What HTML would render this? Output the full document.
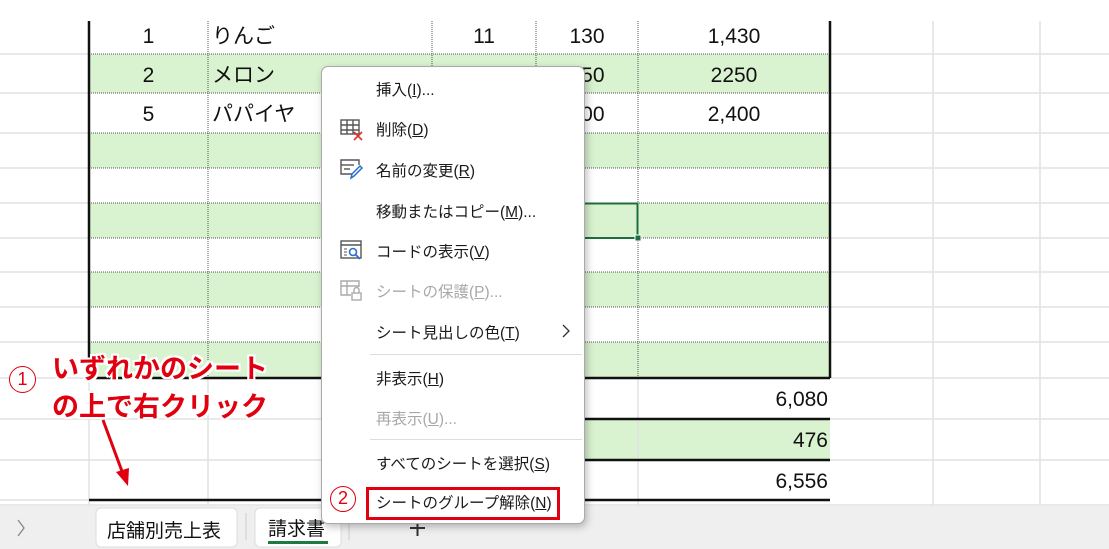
<!DOCTYPE html>
<html><head><meta charset="utf-8"><style>
*{margin:0;padding:0;box-sizing:border-box}
body{width:1109px;height:549px;overflow:hidden;background:#fff;position:relative;font-family:"Liberation Sans","Noto Sans CJK JP",sans-serif;color:#111}
.a{position:absolute}
.t{position:absolute;font-size:21px;line-height:40px;height:40px}
.mi{position:absolute;left:54px;font-size:15.5px;color:#1a1a1a;white-space:nowrap}
.dis{color:#a8a8a8}
u{text-decoration:underline}
.ann{position:absolute;color:#e0000f;font-weight:bold;font-size:27px;white-space:nowrap;text-shadow:2px 0 #fff,-2px 0 #fff,0 2px #fff,0 -2px #fff,2px 2px #fff,-2px -2px #fff,2px -2px #fff,-2px 2px #fff}
</style></head><body>
<svg class="a" style="left:0;top:0" width="1109" height="549">
<g fill="#d9f2d0">
<rect x="89" y="54" width="741" height="39"/>
<rect x="89" y="133" width="741" height="35"/>
<rect x="89" y="203" width="741" height="35"/>
<rect x="89" y="272" width="741" height="35"/>
<rect x="89" y="342" width="741" height="36"/>
<rect x="432" y="419" width="398" height="41"/>
</g>
<g stroke="#e2e2e2" stroke-width="1.5">
<line x1="0" y1="54" x2="89" y2="54"/><line x1="0" y1="93" x2="89" y2="93"/><line x1="0" y1="133" x2="89" y2="133"/><line x1="0" y1="168" x2="89" y2="168"/><line x1="0" y1="203" x2="89" y2="203"/><line x1="0" y1="238" x2="89" y2="238"/><line x1="0" y1="272" x2="89" y2="272"/><line x1="0" y1="307" x2="89" y2="307"/><line x1="0" y1="342" x2="89" y2="342"/><line x1="0" y1="378" x2="89" y2="378"/><line x1="0" y1="419" x2="89" y2="419"/><line x1="0" y1="460" x2="89" y2="460"/><line x1="0" y1="500" x2="89" y2="500"/>
<line x1="830" y1="54" x2="1109" y2="54"/><line x1="830" y1="93" x2="1109" y2="93"/><line x1="830" y1="133" x2="1109" y2="133"/><line x1="830" y1="168" x2="1109" y2="168"/><line x1="830" y1="203" x2="1109" y2="203"/><line x1="830" y1="238" x2="1109" y2="238"/><line x1="830" y1="272" x2="1109" y2="272"/><line x1="830" y1="307" x2="1109" y2="307"/><line x1="830" y1="342" x2="1109" y2="342"/><line x1="830" y1="378" x2="1109" y2="378"/><line x1="830" y1="419" x2="1109" y2="419"/><line x1="830" y1="460" x2="1109" y2="460"/><line x1="0" y1="505" x2="1109" y2="505"/>
<line x1="933" y1="21" x2="933" y2="506"/><line x1="1040" y1="21" x2="1040" y2="506"/>
<line x1="208" y1="378" x2="208" y2="506"/><line x1="638" y1="378" x2="638" y2="506"/><line x1="89" y1="378" x2="89" y2="506"/>
<line x1="89" y1="419" x2="432" y2="419"/><line x1="89" y1="460" x2="432" y2="460"/>
</g>
<g stroke="#555" stroke-width="1" stroke-dasharray="1,1">
<line x1="89" y1="54" x2="830" y2="54"/><line x1="89" y1="93" x2="830" y2="93"/><line x1="89" y1="133" x2="830" y2="133"/><line x1="89" y1="168" x2="830" y2="168"/><line x1="89" y1="203" x2="830" y2="203"/><line x1="89" y1="238" x2="830" y2="238"/><line x1="89" y1="272" x2="830" y2="272"/><line x1="89" y1="307" x2="830" y2="307"/><line x1="89" y1="342" x2="830" y2="342"/>
<line x1="208" y1="21" x2="208" y2="378"/><line x1="432" y1="21" x2="432" y2="378"/><line x1="536" y1="21" x2="536" y2="378"/><line x1="638" y1="21" x2="638" y2="378"/>
</g>
<g stroke="#111" stroke-width="2.5">
<line x1="89" y1="21" x2="89" y2="378"/><line x1="830" y1="21" x2="830" y2="378"/>
<line x1="89" y1="378" x2="830" y2="378"/><line x1="432" y1="419" x2="830" y2="419"/><line x1="432" y1="460" x2="830" y2="460"/><line x1="89" y1="500" x2="830" y2="500"/>
</g>
<rect x="536.5" y="203.5" width="101" height="34.5" fill="none" stroke="#1e6e3f" stroke-width="2"/>
<rect x="635" y="235" width="6" height="6" fill="#1e6e3f" stroke="#fff" stroke-width="1"/>
<rect x="0" y="506" width="1109" height="43" fill="#efefef"/>
<path d="M18 520 L24 528 L18 536" fill="none" stroke="#888" stroke-width="1.3"/>
<rect x="96" y="508" width="141" height="39" rx="5" fill="#fff" stroke="#ddd"/>
<rect x="255" y="508" width="86" height="39" rx="5" fill="#fff" stroke="#ddd"/>
<line x1="246" y1="513" x2="246" y2="540" stroke="#ccc"/><line x1="349" y1="513" x2="349" y2="540" stroke="#ccc"/>
<rect x="268" y="541" width="60" height="3" fill="#1e7a3e"/>
<path d="M410 528 H425 M417.5 520 V536" stroke="#333" stroke-width="2"/>
</svg>
<div class="a" style="left:107px;top:516px;font-size:19px">店舗別売上表</div>
<div class="a" style="left:268px;top:514px;font-size:19px">請求書</div>
<div class="t" style="left:89px;width:119px;text-align:center;top:17px">1</div>
<div class="t" style="left:212px;top:17px">りんご</div>
<div class="t" style="left:432px;width:104px;text-align:center;top:17px">11</div>
<div class="t" style="left:536px;width:102px;text-align:center;top:17px">130</div>
<div class="t" style="left:638px;width:192px;text-align:center;top:17px">1,430</div>
<div class="t" style="left:89px;width:119px;text-align:center;top:56px">2</div>
<div class="t" style="left:212px;top:56px">メロン</div>
<div class="t" style="left:536px;width:102px;text-align:center;top:56px">250</div>
<div class="t" style="left:638px;width:192px;text-align:center;top:56px">2250</div>
<div class="t" style="left:89px;width:119px;text-align:center;top:95px">5</div>
<div class="t" style="left:212px;top:95px">パパイヤ</div>
<div class="t" style="left:536px;width:102px;text-align:center;top:95px">200</div>
<div class="t" style="left:638px;width:192px;text-align:center;top:95px">2,400</div>
<div class="t" style="left:638px;width:190px;text-align:right;top:380px">6,080</div>
<div class="t" style="left:638px;width:190px;text-align:right;top:421px">476</div>
<div class="t" style="left:638px;width:190px;text-align:right;top:462px">6,556</div>
<div class="a" style="left:321px;top:66px;width:264px;height:458px;background:#fff;border:1px solid #aaa;border-radius:7px;box-shadow:2px 3px 8px rgba(0,0,0,.25)">
<div class="mi" style="top:11px">挿入(<u>I</u>)...</div>
<svg class="a" style="left:18px;top:52px" width="24" height="22"><g fill="none" stroke="#555" stroke-width="1.4"><rect x="1" y="1" width="18" height="14"/><line x1="1" y1="6" x2="19" y2="6"/><line x1="1" y1="11" x2="19" y2="11"/><line x1="7" y1="1" x2="7" y2="15"/><line x1="13" y1="1" x2="13" y2="15"/></g><path d="M14 13 L22 21 M22 13 L14 21" stroke="#e03030" stroke-width="1.6"/></svg>
<div class="mi" style="top:51px">削除(<u>D</u>)</div>
<svg class="a" style="left:18px;top:92px" width="24" height="22"><g fill="none" stroke="#555" stroke-width="1.4"><path d="M13 15 H1 V1 H19 V6"/><line x1="1" y1="6" x2="14" y2="6"/><line x1="4" y1="10" x2="10" y2="10"/></g><path d="M11 19 L12 15 L20 7 L22 9 L14 17 Z" fill="#fff" stroke="#2a6fd0" stroke-width="1.5"/></svg>
<div class="mi" style="top:92px">名前の変更(<u>R</u>)</div>
<div class="mi" style="top:133px">移動またはコピー(<u>M</u>)...</div>
<svg class="a" style="left:18px;top:173px" width="24" height="22"><g fill="none" stroke="#555" stroke-width="1.4"><rect x="1" y="1" width="20" height="17"/><line x1="1" y1="5" x2="21" y2="5"/></g><circle cx="13" cy="12" r="3.5" fill="none" stroke="#2a6fd0" stroke-width="1.6"/><path d="M15.5 14.5 L20 19" stroke="#2a6fd0" stroke-width="1.8"/><path d="M4 9h3M4 12h3M4 15h3" stroke="#555"/></svg>
<div class="mi" style="top:173px">コードの表示(<u>V</u>)</div>
<svg class="a" style="left:18px;top:213px" width="24" height="22"><g fill="none" stroke="#aaa" stroke-width="1.4"><path d="M11 15 H1 V1 H19 V7"/><line x1="1" y1="6" x2="19" y2="6"/><line x1="7" y1="1" x2="7" y2="15"/><rect x="12" y="13" width="9" height="7"/><path d="M14 13 V10 a2.5 2.5 0 0 1 5 0 V13"/></g></svg>
<div class="mi dis" style="top:213px">シートの保護(<u>P</u>)...</div>
<div class="mi" style="top:254px">シート見出しの色(<u>T</u>)</div>
<svg class="a" style="left:239px;top:256px" width="10" height="16"><path d="M2 2 L8 8 L2 14" fill="none" stroke="#333" stroke-width="1.3"/></svg>
<div class="a" style="left:48px;top:287px;width:212px;height:1px;background:#ddd"></div>
<div class="mi" style="top:300px">非表示(<u>H</u>)</div>
<div class="mi dis" style="top:340px">再表示(<u>U</u>)...</div>
<div class="a" style="left:48px;top:372px;width:212px;height:1px;background:#ddd"></div>
<div class="mi" style="top:385px">すべてのシートを選択(<u>S</u>)</div>
<div class="mi" style="top:424px">シートのグループ解除(<u>N</u>)</div>
<div class="a" style="left:44px;top:420px;width:194px;height:33px;border:3px solid #e0000f"></div>
</div>
<div class="a" style="left:330px;top:486px;width:26px;height:26px;border:1.5px solid #e0000f;border-radius:50%;background:#fff;color:#e0000f;font-size:18px;text-align:center;line-height:23px">2</div>
<div class="a" style="left:9px;top:366px;width:27px;height:27px;border:1.5px solid #e0000f;border-radius:50%;background:#fff;color:#e0000f;font-size:18px;text-align:center;line-height:24px">1</div>
<div class="ann" style="left:52px;top:347px">いずれかのシート</div>
<div class="ann" style="left:52px;top:385px">の上で右クリック</div>
<svg class="a" style="left:95px;top:418px" width="45" height="72"><path d="M8 2 L28 56" stroke="#e0000f" stroke-width="3"/><path d="M21 54 L33 68 L34 50 Z" fill="#e0000f"/></svg>
</body></html>
